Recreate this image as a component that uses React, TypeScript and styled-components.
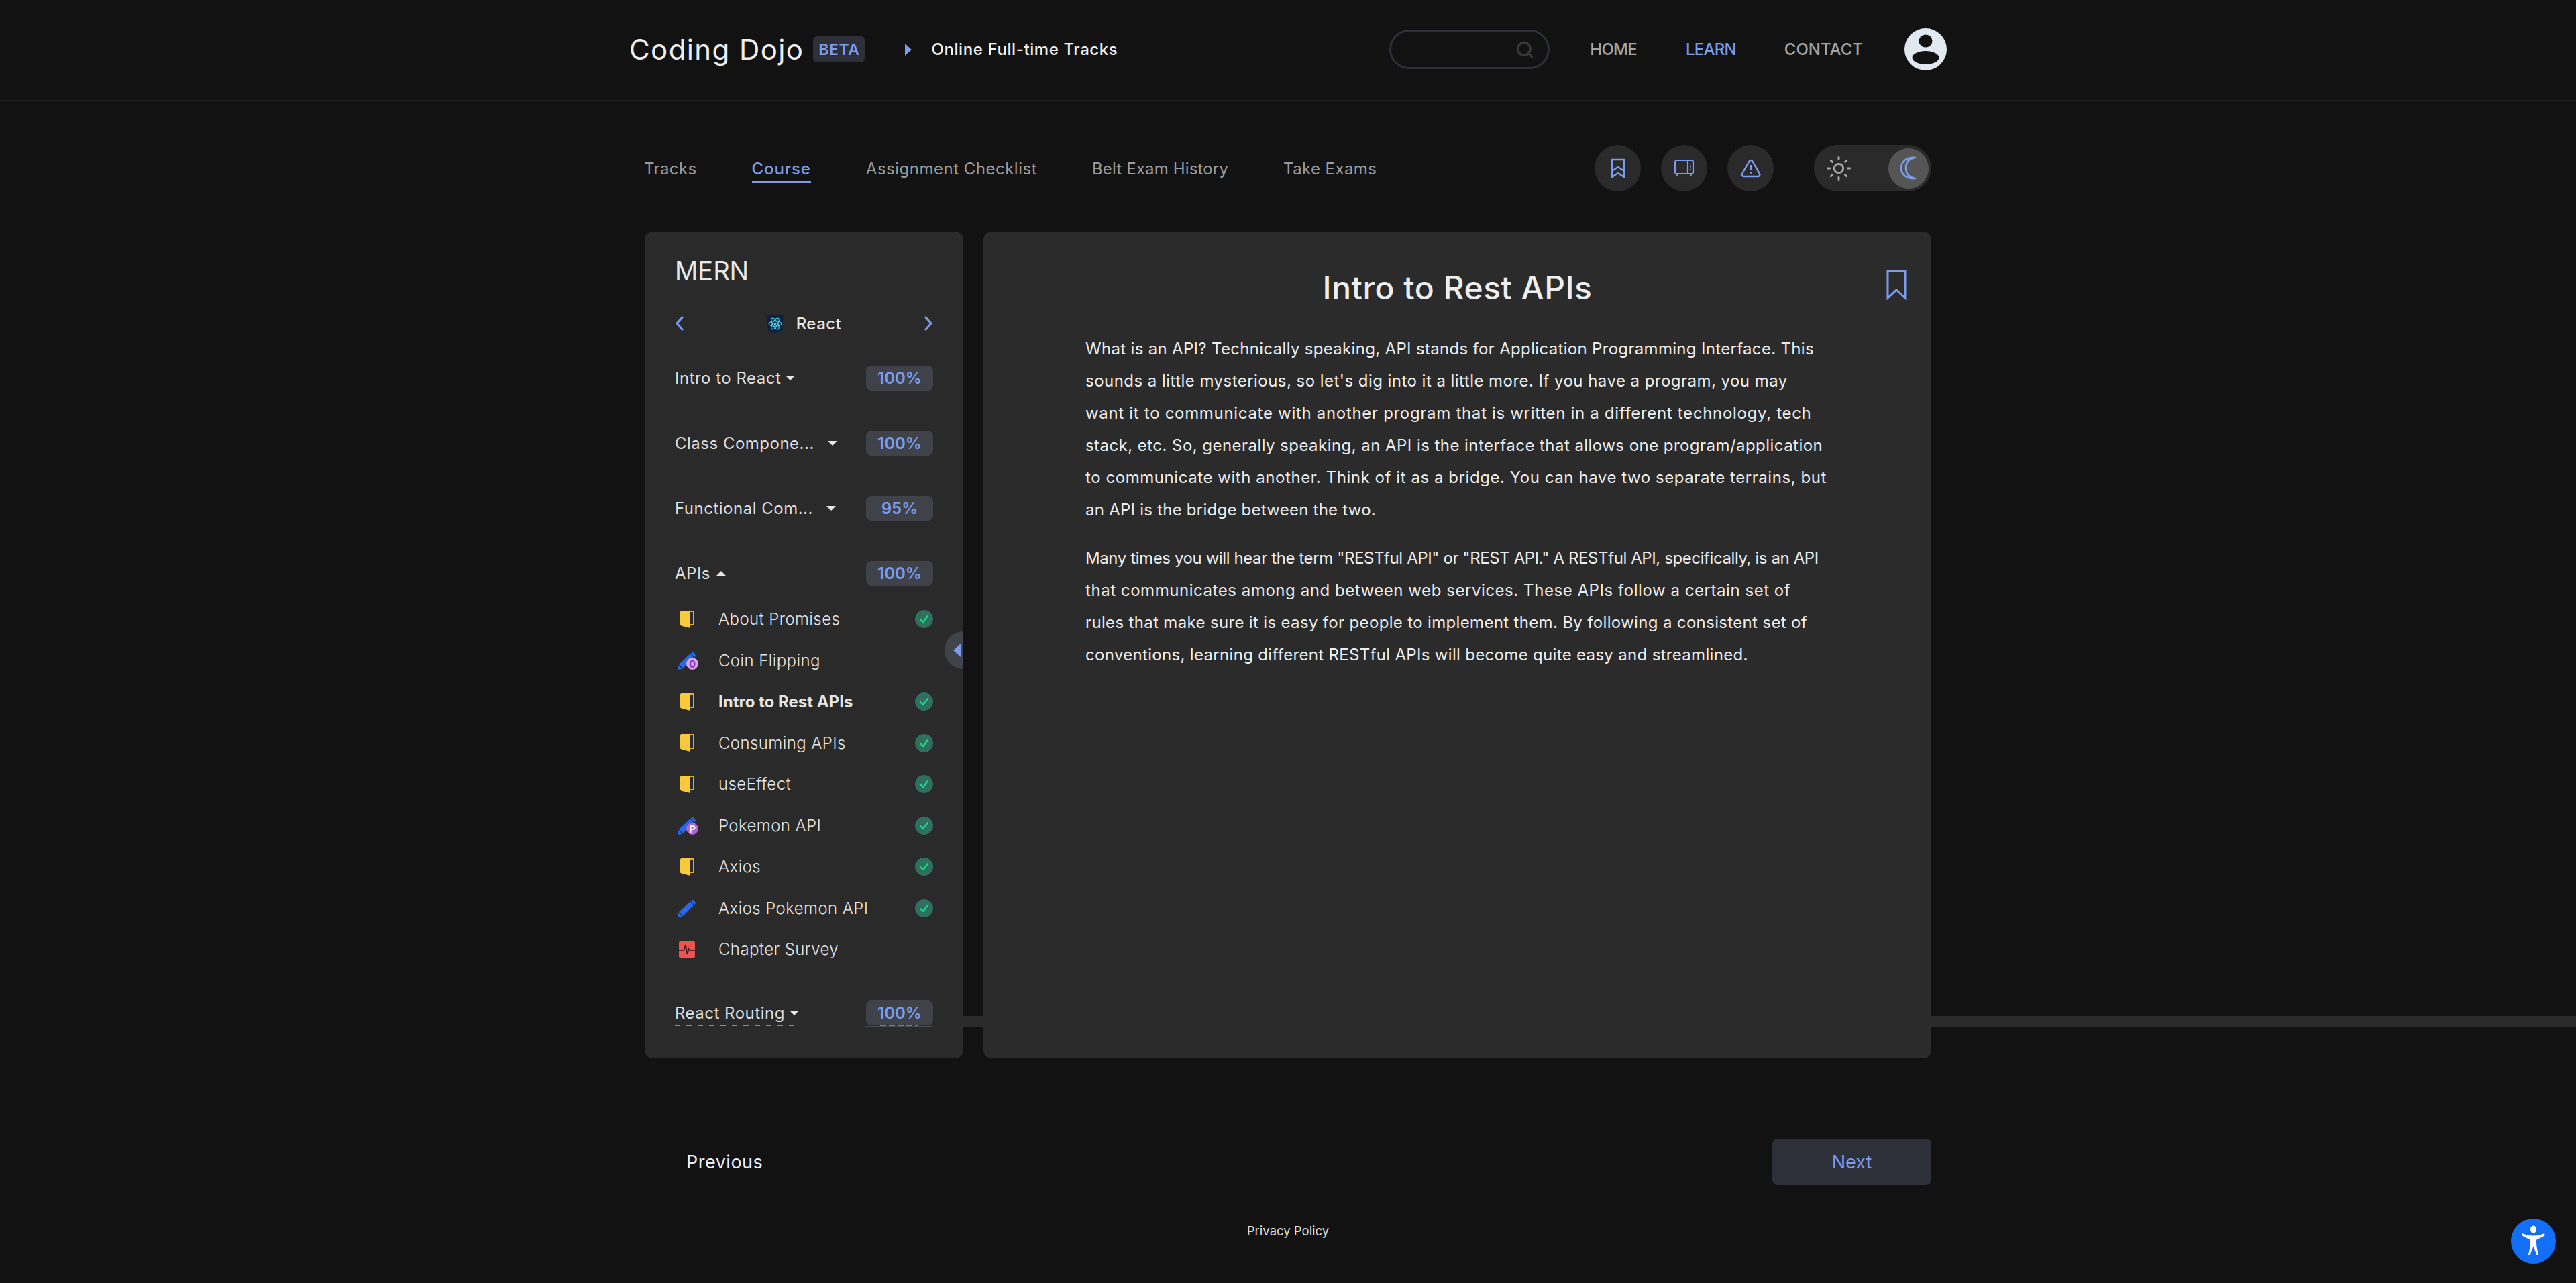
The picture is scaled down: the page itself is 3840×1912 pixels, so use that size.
import React from "react";
import styled, { createGlobalStyle } from "styled-components";
import { Search, Sun, TriangleAlert } from "lucide-react";

const BLUE = "#7b9bec";

const GlobalStyle = createGlobalStyle`
  html, body {
    margin: 0;
    padding: 0;
    background: #121212;
  }
  * {
    box-sizing: border-box;
  }
  body {
    font-family: Inter, "Noto Sans", sans-serif;
    color: #e6e6e6;
  }
`;

const Page = styled.div`
  position: relative;
  width: 3840px;
  height: 1912px;
  overflow: hidden;
`;

const Header = styled.header`
  display: flex;
  align-items: center;
  height: 150px;
  padding: 0 938px 2px 938px;
  border-bottom: 1px solid #222;
`;

const Brand = styled.div`
  font-size: 42px;
  letter-spacing: 1.4px;
  color: #eee;
`;

const Badge = styled.span`
  display: flex;
  align-items: center;
  justify-content: center;
  width: 77px;
  height: 39px;
  margin-left: 14px;
  border-radius: 6px;
  background: #2d3038;
  color: ${BLUE};
  font-size: 23px;
  font-weight: 600;
  letter-spacing: 0.6px;
`;

const Crumb = styled.div`
  display: flex;
  align-items: center;
  margin-left: 60px;
  gap: 29px;
  font-size: 24px;
  font-weight: 500;
  letter-spacing: 0.6px;
  color: #f0f0f0;
`;

const CrumbArrow = styled.span`
  width: 0;
  height: 0;
  border-left: 10px solid ${BLUE};
  border-top: 9px solid transparent;
  border-bottom: 9px solid transparent;
`;

const SearchBox = styled.div`
  display: flex;
  align-items: center;
  justify-content: flex-end;
  width: 239px;
  height: 59px;
  margin-left: auto;
  padding-right: 20px;
  border: 3px solid #2d3038;
  border-radius: 30px;
  color: #383838;
`;

const TopLink = styled.a<{ $active?: boolean; $gap?: number; $track?: number }>`
  margin-left: ${(p) => p.$gap ?? 60}px;
  font-size: 24px;
  font-weight: 500;
  letter-spacing: ${(p) => p.$track ?? 0}px;
  color: ${(p) => (p.$active ? BLUE : "#a3a3a3")};
`;

const Avatar = styled.svg`
  width: 63px;
  height: 63px;
  margin-left: 62px;
`;

const SubNav = styled.nav`
  display: flex;
  align-items: center;
  width: 1919px;
  height: 69px;
  margin: 66px 0 60px 960px;
`;

const Tab = styled.a<{ $active?: boolean; $track: number }>`
  margin-right: 82px;
  padding-bottom: 3px;
  border-bottom: 3px solid ${(p) => (p.$active ? BLUE : "transparent")};
  font-size: 24px;
  font-weight: ${(p) => (p.$active ? 500 : 400)};
  letter-spacing: ${(p) => p.$track}px;
  color: ${(p) => (p.$active ? BLUE : "#9b9b9b")};
  transform: translateY(4px);
`;

const Tools = styled.div`
  display: flex;
  gap: 30px;
  margin-left: auto;
`;

const IconButton = styled.button`
  display: flex;
  align-items: center;
  justify-content: center;
  width: 69px;
  height: 69px;
  padding: 0;
  border: 0;
  border-radius: 50%;
  background: #2a2a2a;
  color: ${BLUE};
`;

const ThemeToggle = styled.div`
  display: flex;
  align-items: center;
  justify-content: space-between;
  width: 175px;
  height: 69px;
  margin-left: 60px;
  padding: 0 4px 0 17px;
  border-radius: 35px;
  background: #2a2a2a;
  color: #a8a8a8;
`;

const Knob = styled.div`
  display: flex;
  align-items: center;
  justify-content: center;
  width: 60px;
  height: 60px;
  border-radius: 50%;
  background: #555;
`;

const Band = styled.div`
  position: absolute;
  left: 961px;
  right: 0;
  top: 1514px;
  height: 17px;
  background: #2a2a2a;
  border-bottom: 1px solid #232323;
`;

const Workspace = styled.main`
  position: relative;
  display: grid;
  grid-template-columns: 475px 1413px;
  gap: 30px;
  height: 1232px;
  margin-left: 961px;
`;

const Sidebar = styled.aside`
  position: relative;
  height: 100%;
  padding: 36px 45px 0;
  border-radius: 12px;
  background: #2a2a2a;
`;

const SidebarTitle = styled.h2`
  margin: 0;
  font-size: 38px;
  line-height: 44px;
  font-weight: 400;
  color: #e8e8e8;
`;

const Carousel = styled.div`
  position: relative;
  display: flex;
  align-items: center;
  justify-content: space-between;
  height: 40px;
  margin-top: 37px;
  color: ${BLUE};
`;

const CarouselLabel = styled.div`
  display: flex;
  align-items: center;
  gap: 19px;
  font-size: 24px;
  font-weight: 500;
  letter-spacing: 0.5px;
  color: #e8e8e8;
`;

const Clip = styled.div`
  height: 1030px;
  overflow: hidden;
`;

const SectionRow = styled.div<{ $top: number }>`
  display: flex;
  align-items: center;
  height: 37px;
  margin-top: ${(p) => p.$top}px;
`;

const SectionName = styled.span`
  font-size: 24px;
  letter-spacing: 0.5px;
  color: #dedede;
  white-space: nowrap;
`;

const Caret = styled.span<{ $up?: boolean; $left: number }>`
  width: 0;
  height: 0;
  margin-left: ${(p) => p.$left}px;
  border-left: 7px solid transparent;
  border-right: 7px solid transparent;
  border-${(p) => (p.$up ? "bottom" : "top")}: 7px solid #e6e6e6;
`;

const Percent = styled.span`
  display: flex;
  align-items: center;
  justify-content: center;
  width: 100px;
  height: 37px;
  margin-left: auto;
  border-radius: 8px;
  background: #3f4249;
  color: ${BLUE};
  font-size: 24px;
  font-weight: 600;
`;

const Items = styled.ul`
  margin: 19px 0 0;
  padding: 0;
  list-style: none;
`;

const Item = styled.li<{ $current?: boolean }>`
  display: flex;
  align-items: center;
  height: 61.5px;
  font-size: 24px;
  font-weight: ${(p) => (p.$current ? 700 : 300)};
  letter-spacing: ${(p) => (p.$current ? 0 : 0.4)}px;
  color: #e4e4e4;
`;

const ItemIcon = styled.span`
  position: relative;
  display: flex;
  justify-content: center;
  width: 36px;
  margin: 0 29px 0 0;
`;

const PencilLetter = styled.span<{ $ring?: boolean }>`
  position: absolute;
  left: 17px;
  top: 10px;
  display: flex;
  align-items: center;
  justify-content: center;
  width: 18px;
  height: 18px;
  border-radius: 50%;
  background: ${(p) => (p.$ring ? "#d9a5ee" : "#b660d8")};
  color: ${(p) => (p.$ring ? "#8a35b5" : "#fff")};
  font-size: 15px;
  line-height: 1;
  font-weight: 700;
  letter-spacing: 0;
`;

const Done = styled.span`
  display: flex;
  align-items: center;
  justify-content: center;
  width: 27px;
  height: 27px;
  margin-left: auto;
  border-radius: 50%;
  background: #2f6f5e;
  color: #18dc8c;
`;

/* hairline left under the last row where the list gets clipped */
const Sliver = styled.div`
  height: 2px;
  background:
    linear-gradient(#484b52, #484b52) 284px 1px / 100px 1px no-repeat,
    repeating-linear-gradient(90deg, #5f7ac0 0 9px, transparent 9px 13px) 306px 0 / 57px 1px no-repeat,
    repeating-linear-gradient(90deg, #8c8c8c 0 8px, transparent 8px 17px) 0 0 / 184px 1px no-repeat;
`;

const CollapseTab = styled.div`
  position: absolute;
  right: 0;
  top: 596px;
  display: flex;
  align-items: center;
  width: 28px;
  height: 56px;
  padding-left: 13px;
  border-radius: 28px 0 0 28px;
  background: #40434a;
`;

const CollapseArrow = styled.span`
  width: 0;
  height: 0;
  border-right: 11px solid ${BLUE};
  border-top: 10px solid transparent;
  border-bottom: 10px solid transparent;
`;

const Content = styled.article`
  position: relative;
  height: 100%;
  padding: 0 152px;
  border-radius: 12px;
  background: #2b2b2b;
`;

const Title = styled.h1`
  margin: 0;
  padding-top: 49px;
  font-size: 48px;
  line-height: 70px;
  font-weight: 500;
  letter-spacing: 0.5px;
  text-align: center;
  color: #eee;
`;

const SaveMark = styled.svg`
  position: absolute;
  right: 37px;
  top: 57px;
  width: 30px;
  height: 45px;
`;

const LessonBody = styled.div`
  margin-top: 32px;
`;

const Lesson = styled.p`
  margin: 0 0 24px;
`;

const LessonLine = styled.span<{ $track: number }>`
  display: block;
  font-size: 24px;
  line-height: 48px;
  letter-spacing: ${(p) => p.$track}px;
  white-space: nowrap;
  color: #ececec;
`;

const Pager = styled.div`
  display: flex;
  align-items: center;
  justify-content: space-between;
  width: 1856px;
  height: 69px;
  margin: 120px 0 0 1023px;
`;

const Previous = styled.a`
  font-size: 27px;
  letter-spacing: 0.5px;
  color: #e9eefb;
`;

const NextButton = styled.button`
  width: 237px;
  height: 69px;
  border: 0;
  border-radius: 8px;
  background: #2d3038;
  color: ${BLUE};
  font-family: inherit;
  font-size: 27px;
`;

const Footer = styled.footer`
  margin-top: 57px;
  text-align: center;
  font-size: 18.500px;
  color: #dedede;
`;

const AccessButton = styled.svg`
  position: absolute;
  left: 3743px;
  top: 1816px;
  width: 67px;
  height: 67px;
`;

const BookmarkStack = () => (
  <svg width="22" height="30" viewBox="0 0 22 30" fill="none" stroke="currentColor" strokeWidth="2.400" strokeLinejoin="round">
    <path d="M2 2h18v26l-9-6-9 6z" />
    <path d="M2 19l9-6 9 6" />
  </svg>
);

const MicrowaveIcon = () => (
  <svg width="31" height="27" viewBox="0 0 31 27" fill="none" stroke="currentColor" strokeWidth="2.200" strokeLinejoin="round">
    <rect x="2" y="2" width="27" height="20" rx="2.500" />
    <path d="M21 2v20M6 22l-1 3M25 22l1 3" />
    <path d="M25 7v1.500M25 11v1.500M25 15v1.500" strokeWidth="2" />
  </svg>
);

const Moon = () => (
  <svg width="26" height="35" viewBox="0 0 26 35" fill="none" stroke={BLUE} strokeWidth="2.600" strokeLinejoin="round">
    <path d="M23 2C12 4 9 11 9 17.500S12 31 23 33C10 34 2 27 2 17.500S10 1 23 2z" />
  </svg>
);

const Door = () => (
  <svg width="22" height="28" viewBox="0 0 22 28">
    <path d="M1 3c0-1 .5-2 2-2h13v26L2.500 23.500C1.500 23 1 22.500 1 21.500z" fill="#f8c93a" />
    <path d="M15 2h6v20h-5" fill="none" stroke="#e0ae2c" strokeWidth="2" />
  </svg>
);

const Pencil = () => (
  <svg width="28" height="28" viewBox="0 0 28 28" fill="#2468f2">
    <path d="M2 20L19 4l5 6L8 26z" />
    <path d="M21 2.500a2 2 0 0 1 3 0l2.500 3a2 2 0 0 1-.3 2.800L25 9.500l-5-6z" />
    <path d="M1 21l6 6-7 1z" />
  </svg>
);

const Survey = () => (
  <svg width="24" height="24" viewBox="0 0 24 24">
    <rect width="24" height="24" rx="2" fill="#ef5350" />
    <path d="M0 13h6l2-1 2-7 2.500 14 2-8 1.500 2h8" fill="none" stroke="#2a1c1c" strokeWidth="1.600" />
  </svg>
);

const ReactMark = () => (
  <svg width="25" height="27" viewBox="0 0 25 27">
    <path d="M0 1l25-1-2 24-10 3-11-2z" fill="#0b2142" />
    <g fill="none" stroke="#4fd0e6" strokeWidth="1.200">
      <ellipse cx="12.500" cy="13.500" rx="9.500" ry="3.800" />
      <ellipse cx="12.500" cy="13.500" rx="9.500" ry="3.800" transform="rotate(60 12.500 13.500)" />
      <ellipse cx="12.500" cy="13.500" rx="9.500" ry="3.800" transform="rotate(120 12.500 13.500)" />
    </g>
    <circle cx="12.500" cy="13.500" r="2" fill="#4fd0e6" />
  </svg>
);

const Chevron = ({ d }: { d: string }) => (
  <svg width="14" height="22" viewBox="0 0 14 22" fill="none" stroke={BLUE} strokeWidth="3.200" strokeLinecap="round" strokeLinejoin="round">
    <path d={d} />
  </svg>
);

const Check = () => (
  <svg width="15" height="13" viewBox="0 0 15 13" fill="none" stroke="currentColor" strokeWidth="2.400" strokeLinecap="round" strokeLinejoin="round">
    <path d="M2 7l4 4 7-9" />
  </svg>
);

type Lecture = { name: string; icon: React.ReactNode; done?: boolean; current?: boolean };

const lectures: Lecture[] = [
  { name: "About Promises", icon: <Door />, done: true },
  { name: "Coin Flipping", icon: <><Pencil /><PencilLetter $ring>0</PencilLetter></> },
  { name: "Intro to Rest APIs", icon: <Door />, done: true, current: true },
  { name: "Consuming APIs", icon: <Door />, done: true },
  { name: "useEffect", icon: <Door />, done: true },
  { name: "Pokemon API", icon: <><Pencil /><PencilLetter>P</PencilLetter></>, done: true },
  { name: "Axios", icon: <Door />, done: true },
  { name: "Axios Pokemon API", icon: <Pencil />, done: true },
  { name: "Chapter Survey", icon: <Survey /> },
];

const tabs: [string, number][] = [
  ["Tracks", 0.4],
  ["Course", 0.9],
  ["Assignment Checklist", 0.5],
  ["Belt Exam History", 0.15],
  ["Take Exams", 0.4],
];

const lesson: [string, number][][] = [
  [
    ["What is an API? Technically speaking, API stands for Application Programming Interface. This", 0.32],
    ["sounds a little mysterious, so let's dig into it a little more. If you have a program, you may", 0.46],
    ["want it to communicate with another program that is written in a different technology, tech", 0.69],
    ["stack, etc. So, generally speaking, an API is the interface that allows one program/application", 0.45],
    ["to communicate with another. Think of it as a bridge. You can have two separate terrains, but", 0.56],
    ["an API is the bridge between the two.", 0.24],
  ],
  [
    ['Many times you will hear the term "RESTful API" or "REST API." A RESTful API, specifically, is an API', -0.4],
    ["that communicates among and between web services. These APIs follow a certain set of", 0.55],
    ["rules that make sure it is easy for people to implement them. By following a consistent set of", 0.34],
    ["conventions, learning different RESTful APIs will become quite easy and streamlined.", 0.32],
  ],
];

export default function App() {
  return (
    <Page>
      <GlobalStyle />
      <Header>
        <Brand>Coding Dojo</Brand>
        <Badge>BETA</Badge>
        <Crumb>
          <CrumbArrow />
          Online Full-time Tracks
        </Crumb>
        <SearchBox>
          <Search size={28} strokeWidth={3} />
        </SearchBox>
        <TopLink $track={-0.7}>HOME</TopLink>
        <TopLink $active $gap={73} $track={-0.8}>LEARN</TopLink>
        <TopLink $gap={72}>CONTACT</TopLink>
        <Avatar viewBox="0 0 63 63">
          <circle cx="31.500" cy="31.500" r="31.500" fill="#e2e8f0" />
          <ellipse cx="31.500" cy="19" rx="10" ry="9.500" fill="#121212" />
          <ellipse cx="31.500" cy="44" rx="20" ry="10" fill="#121212" />
        </Avatar>
      </Header>

      <SubNav>
        {tabs.map(([t, track]) => (
          <Tab key={t} $active={t === "Course"} $track={track}>{t}</Tab>
        ))}
        <Tools>
          <IconButton><BookmarkStack /></IconButton>
          <IconButton><MicrowaveIcon /></IconButton>
          <IconButton><TriangleAlert size={32} strokeWidth={1.8} /></IconButton>
        </Tools>
        <ThemeToggle>
          <Sun size={40} strokeWidth={1.7} />
          <Knob><Moon /></Knob>
        </ThemeToggle>
      </SubNav>

      <Band />

      <Workspace>
        <Sidebar>
          <SidebarTitle>MERN</SidebarTitle>
          <Carousel>
            <Chevron d="M11 2L3 11l8 9" />
            <CarouselLabel><ReactMark />React</CarouselLabel>
            <Chevron d="M3 2l8 9-8 9" />
          </Carousel>
          <Clip>
            <SectionRow $top={43}>
              <SectionName>Intro to React</SectionName>
              <Caret $left={7} />
              <Percent>100%</Percent>
            </SectionRow>
            <SectionRow $top={60}>
              <SectionName>Class Compone...</SectionName>
              <Caret $left={20} />
              <Percent>100%</Percent>
            </SectionRow>
            <SectionRow $top={60}>
              <SectionName>Functional Com...</SectionName>
              <Caret $left={20} />
              <Percent>95%</Percent>
            </SectionRow>
            <SectionRow $top={60}>
              <SectionName>APIs</SectionName>
              <Caret $up $left={9} />
              <Percent>100%</Percent>
            </SectionRow>
            <Items>
              {lectures.map((l) => (
                <Item key={l.name} $current={l.current}>
                  <ItemIcon>{l.icon}</ItemIcon>
                  {l.name}
                  {l.done && <Done><Check /></Done>}
                </Item>
              ))}
            </Items>
            <SectionRow $top={45}>
              <SectionName>React Routing</SectionName>
              <Caret $left={7} />
              <Percent>100%</Percent>
            </SectionRow>
            <Sliver />
          </Clip>
          <CollapseTab><CollapseArrow /></CollapseTab>
        </Sidebar>

        <Content>
          <Title>Intro to Rest APIs</Title>
          <SaveMark viewBox="0 0 30 45" fill="none" stroke={BLUE} strokeWidth="3">
            <path d="M2 2h26v40L15 30 2 42z" />
          </SaveMark>
          <LessonBody>
            {lesson.map((para, i) => (
              <Lesson key={i}>
                {para.map(([text, track]) => (
                  <LessonLine key={text} $track={track}>{text}</LessonLine>
                ))}
              </Lesson>
            ))}
          </LessonBody>
        </Content>
      </Workspace>

      <Pager>
        <Previous>Previous</Previous>
        <NextButton>Next</NextButton>
      </Pager>

      <Footer>Privacy Policy</Footer>

      <AccessButton viewBox="0 0 67 67">
        <circle cx="33.500" cy="33.500" r="33.500" fill="#146ff8" />
        <ellipse cx="33.500" cy="16" rx="4.500" ry="5.500" fill="#fff" />
        <path d="M17 22c5 2.500 11 3.500 16.500 3.500S45 24.500 50 22l.5 3c-4 3-7 4-9.500 5-3 1-3 2-3 5 0 8 2 14 3 19l-2.500.5-5-13-5 13-2.500-.5c1-5 3-11 3-19 0-3 0-4-3-5-2.500-1-5.500-2-9.500-5z" fill="#fff" />
      </AccessButton>
    </Page>
  );
}
